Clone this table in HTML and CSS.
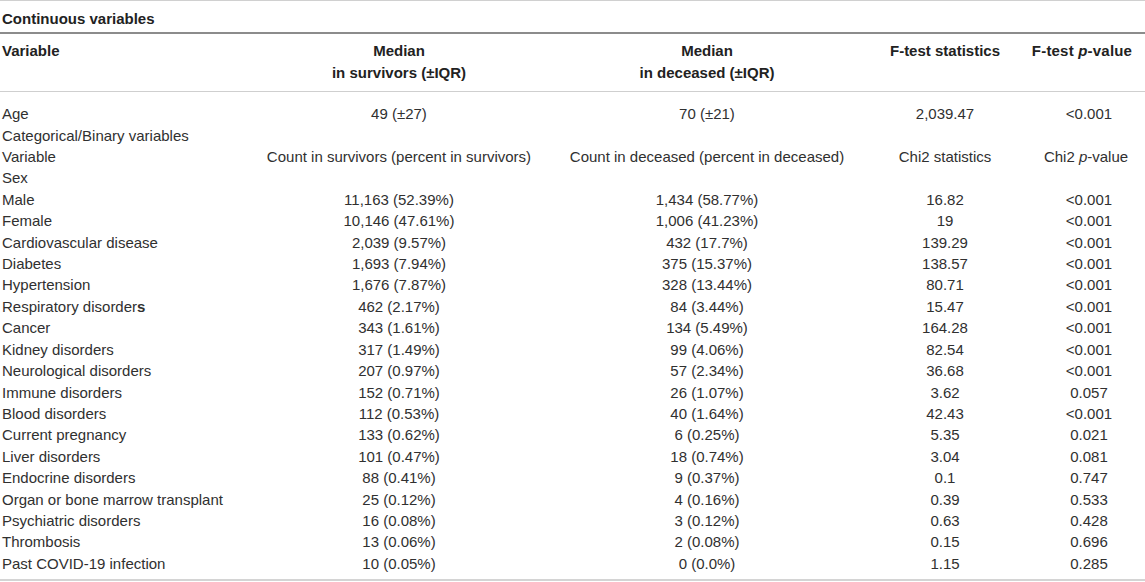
FILE: index.html
```html
<!DOCTYPE html>
<html>
<head>
<meta charset="utf-8">
<link rel="stylesheet" href="styles.css">
</head>
<body>
<table class="tbl">
  <colgroup>
    <col class="c1"><col class="c2"><col class="c3"><col class="c4"><col class="c5">
  </colgroup>
  <thead>
    <tr class="title-row"><th colspan="5" class="title">Continuous variables</th></tr>
    <tr class="head-row">
      <th class="left">Variable</th>
      <th>Median<br>in survivors (±IQR)</th>
      <th>Median<br>in deceased (±IQR)</th>
      <th>F-test statistics</th>
      <th class="pvh">F-test <i>p</i>-value</th>
    </tr>
  </thead>
  <tbody>
    <tr class="first"><td class="left">Age</td><td>49 (±27)</td><td>70 (±21)</td><td>2,039.47</td><td class="pv">&lt;0.001</td></tr>
    <tr><td class="left">Categorical/Binary variables</td><td></td><td></td><td></td><td></td></tr>
    <tr><td class="left">Variable</td><td>Count in survivors (percent in survivors)</td><td>Count in deceased (percent in deceased)</td><td>Chi2 statistics</td><td class="pvt">Chi2 <i>p</i>-value</td></tr>
    <tr><td class="left">Sex</td><td></td><td></td><td></td><td></td></tr>
    <tr><td class="left">Male</td><td>11,163 (52.39%)</td><td>1,434 (58.77%)</td><td>16.82</td><td class="pv">&lt;0.001</td></tr>
    <tr><td class="left">Female</td><td>10,146 (47.61%)</td><td>1,006 (41.23%)</td><td>19</td><td class="pv">&lt;0.001</td></tr>
    <tr><td class="left">Cardiovascular disease</td><td>2,039 (9.57%)</td><td>432 (17.7%)</td><td>139.29</td><td class="pv">&lt;0.001</td></tr>
    <tr><td class="left">Diabetes</td><td>1,693 (7.94%)</td><td>375 (15.37%)</td><td>138.57</td><td class="pv">&lt;0.001</td></tr>
    <tr><td class="left">Hypertension</td><td>1,676 (7.87%)</td><td>328 (13.44%)</td><td>80.71</td><td class="pv">&lt;0.001</td></tr>
    <tr><td class="left">Respiratory disorder<b>s</b></td><td>462 (2.17%)</td><td>84 (3.44%)</td><td>15.47</td><td class="pv">&lt;0.001</td></tr>
    <tr><td class="left">Cancer</td><td>343 (1.61%)</td><td>134 (5.49%)</td><td>164.28</td><td class="pv">&lt;0.001</td></tr>
    <tr><td class="left">Kidney disorders</td><td>317 (1.49%)</td><td>99 (4.06%)</td><td>82.54</td><td class="pv">&lt;0.001</td></tr>
    <tr><td class="left">Neurological disorders</td><td>207 (0.97%)</td><td>57 (2.34%)</td><td>36.68</td><td class="pv">&lt;0.001</td></tr>
    <tr><td class="left">Immune disorders</td><td>152 (0.71%)</td><td>26 (1.07%)</td><td>3.62</td><td class="pv">0.057</td></tr>
    <tr><td class="left">Blood disorders</td><td>112 (0.53%)</td><td>40 (1.64%)</td><td>42.43</td><td class="pv">&lt;0.001</td></tr>
    <tr><td class="left">Current pregnancy</td><td>133 (0.62%)</td><td>6 (0.25%)</td><td>5.35</td><td class="pv">0.021</td></tr>
    <tr><td class="left">Liver disorders</td><td>101 (0.47%)</td><td>18 (0.74%)</td><td>3.04</td><td class="pv">0.081</td></tr>
    <tr><td class="left">Endocrine disorders</td><td>88 (0.41%)</td><td>9 (0.37%)</td><td>0.1</td><td class="pv">0.747</td></tr>
    <tr><td class="left">Organ or bone marrow transplant</td><td>25 (0.12%)</td><td>4 (0.16%)</td><td>0.39</td><td class="pv">0.533</td></tr>
    <tr><td class="left">Psychiatric disorders</td><td>16 (0.08%)</td><td>3 (0.12%)</td><td>0.63</td><td class="pv">0.428</td></tr>
    <tr><td class="left">Thrombosis</td><td>13 (0.06%)</td><td>2 (0.08%)</td><td>0.15</td><td class="pv">0.696</td></tr>
    <tr class="last"><td class="left">Past COVID-19 infection</td><td>10 (0.05%)</td><td>0 (0.0%)</td><td>1.15</td><td class="pv">0.285</td></tr>
  </tbody>
</table>
</body>
</html>
```
FILE: styles.css
```css
html, body {
  margin: 0;
  padding: 0;
  background: #ffffff;
}
body {
  font-family: "Liberation Sans", Arial, sans-serif;
  font-size: 15px;
  color: #303030;
}
.tbl {
  width: 1145px;
  border-collapse: collapse;
  table-layout: fixed;
  border-top: 1px solid #d0d0d0;
  border-bottom: 2px solid #d4d4d4;
}
.c1 { width: 259px; }
.c2 { width: 280px; }
.c3 { width: 336px; }
.c4 { width: 140px; }
.c5 { width: 130px; }
th, td {
  padding: 0;
  text-align: center;
  vertical-align: top;
  white-space: nowrap;
  line-height: 21.4px;
  font-weight: normal;
}
th { font-weight: bold; color: #222; }
.left { text-align: left; padding-left: 2px; }
.title-row th {
  text-align: left;
  padding: 7px 0 3px 2px;
  border-bottom: 2px solid #8c8c8c;
}
.head-row th {
  padding-top: 6px;
  padding-bottom: 8px;
  border-bottom: 1px solid #cfcfcf;
}
.head-row th.left { padding-left: 2px; }
.head-row th.pvh { padding-left: 4px; letter-spacing: 0.2px; }
tr.first td { padding-top: 11px; }
tr.last td { padding-bottom: 5px; }
td.pv { padding-left: 18px; }
td.pvt { padding-left: 12px; }
```
